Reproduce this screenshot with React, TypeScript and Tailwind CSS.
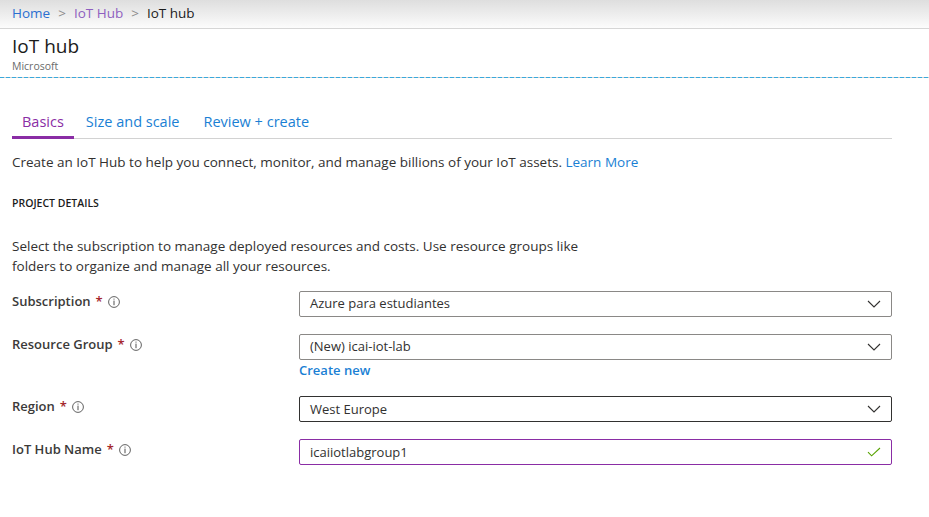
import React from "react";

const tabs = ["Basics", "Size and scale", "Review + create"];

function InfoIcon() {
  return (
    <svg width="12" height="12" viewBox="0 0 12 12" className="ml-[5px] text-[#505050]">
      <circle cx="6" cy="6" r="5.4" fill="none" stroke="currentColor" strokeWidth="0.9" />
      <rect x="5.5" y="2.6" width="1" height="1" fill="currentColor" />
      <rect x="5.5" y="4.6" width="1" height="4.6" fill="currentColor" />
    </svg>
  );
}

function Chevron() {
  return (
    <svg width="14" height="8" viewBox="0 0 14 8" className="mr-[2px] text-[#323130]">
      <path d="M1 1l6 6 6-6" fill="none" stroke="currentColor" strokeWidth="1.1" />
    </svg>
  );
}

function Check() {
  return (
    <svg width="14" height="10" viewBox="0 0 14 10" className="mr-[2px] text-[#57a300]">
      <path d="M1 5.2l3.6 3.6L13 1" fill="none" stroke="currentColor" strokeWidth="1.1" />
    </svg>
  );
}

function Label({ text }: { text: string }) {
  return (
    <div className="flex w-[287px] items-center pt-px text-[13px] font-semibold text-[#3b3a39]">
      <span>{text}</span>
      <span className="ml-[5px] text-[#a4262c]">*</span>
      <InfoIcon />
    </div>
  );
}

function Field({
  value,
  border,
  icon,
}: {
  value: string;
  border: string;
  icon: React.ReactNode;
}) {
  return (
    <div
      className={
        "flex h-[26px] w-[593px] items-center justify-between rounded-[2px] border pl-[10px] pr-[8px] text-[13px] text-[#323130] " +
        border
      }
    >
      <span>{value}</span>
      {icon}
    </div>
  );
}

export default function App() {
  return (
    <div className="h-[517px] w-[929px] overflow-hidden bg-white font-['Open_Sans',sans-serif] text-[#323130]">
      <div className="flex h-[29px] items-center border-b border-[#d6d6d6] bg-gradient-to-b from-[#dedede] to-[#fcfcfc] px-[12px] pb-px text-[13.5px]">
        <span className="text-[#2b6fd1]">Home</span>
        <span className="mx-[8px] text-[#8a8a8a]">&gt;</span>
        <span className="text-[#8e5fc0]">IoT Hub</span>
        <span className="mx-[8px] text-[#8a8a8a]">&gt;</span>
        <span className="text-[#1b1b1b]">IoT hub</span>
      </div>
      <div className="px-[12px] pt-[4px]">
        <div className="text-[19px] leading-[26px] text-[#1b1b1b]">IoT hub</div>
        <div className="text-[10.5px] leading-[14px] text-[#6b6b6b]">Microsoft</div>
      </div>
      <div className="mt-[4px] h-px bg-[repeating-linear-gradient(90deg,#3aa9dc_0px,#3aa9dc_4px,#cfcfcf_4px,#cfcfcf_6px)]" />

      <div className="px-[12px]">
        <div className="mt-[33px] flex w-[880px] border-b border-[#d2d2d2] text-[14.5px]">
          {tabs.map((t, i) => (
            <div
              key={t}
              className={
                i === 0
                  ? "-mb-px border-b-[3px] border-[#8a2da5] px-[10px] pb-[3px] text-[#8a2da5]"
                  : "-mb-px border-b-[3px] border-transparent px-[12px] pb-[3px] text-[#1a7fd4]"
              }
            >
              {t}
            </div>
          ))}
        </div>

        <p className="mt-[14px] text-[13.5px] leading-[18px]">
          Create an IoT Hub to help you connect, monitor, and manage billions of your IoT assets.{" "}
          <span className="text-[#1a7fd4]">Learn More</span>
        </p>

        <div className="mt-[25px] text-[10.5px] font-semibold leading-[14px] text-[#1b1b1b]">PROJECT DETAILS</div>

        <p className="mt-[26px] w-[590px] text-[13.5px] leading-[20px]">
          Select the subscription to manage deployed resources and costs. Use resource groups like folders to
          organize and manage all your resources.
        </p>

        <div className="mt-[15px] flex items-start">
          <Label text="Subscription" />
          <Field value="Azure para estudiantes" border="border-[#8a8886]" icon={<Chevron />} />
        </div>

        <div className="mt-[17px] flex items-start">
          <Label text="Resource Group" />
          <div>
            <Field value="(New) icai-iot-lab" border="border-[#8a8886]" icon={<Chevron />} />
            <div className="mt-[1px] text-[13px] font-semibold text-[#1a7fd4]">Create new</div>
          </div>
        </div>

        <div className="mt-[16px] flex items-start">
          <Label text="Region" />
          <Field value="West Europe" border="border-[#323130]" icon={<Chevron />} />
        </div>

        <div className="mt-[17px] flex items-start">
          <Label text="IoT Hub Name" />
          <Field value="icaiiotlabgroup1" border="border-[#8a2da5]" icon={<Check />} />
        </div>
      </div>
    </div>
  );
}
